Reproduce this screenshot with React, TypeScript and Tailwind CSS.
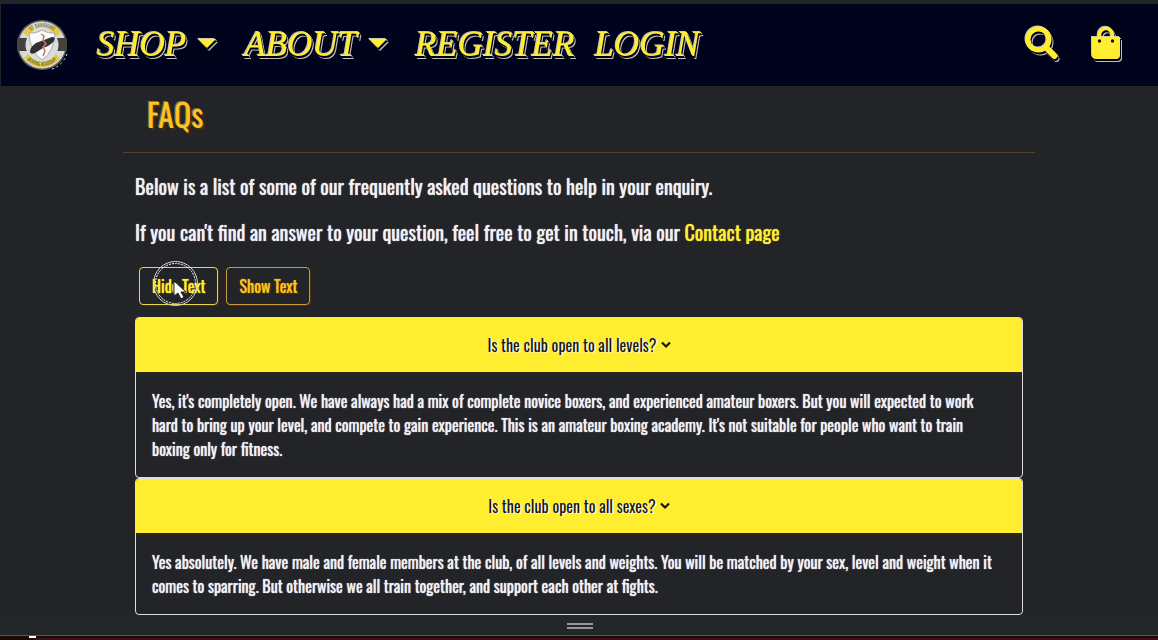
import type { ReactNode } from "react";

const faqs = [
  {
    id: "levels",
    question: "Is the club open to all levels?",
    answer:
      "Yes, it's completely open. We have always had a mix of complete novice boxers, and experienced amateur boxers. But you will expected to work hard to bring up your level, and compete to gain experience. This is an amateur boxing academy. It's not suitable for people who want to train boxing only for fitness.",
  },
  {
    id: "sexes",
    question: "Is the club open to all sexes?",
    answer:
      "Yes absolutely. We have male and female members at the club, of all levels and weights. You will be matched by your sex, level and weight when it comes to sparring. But otherwise we all train together, and support each other at fights.",
  },
];

const glow =
  "[filter:drop-shadow(-1px_-1px_0_#c9c8b4)_drop-shadow(1px_2px_0_#000)_drop-shadow(1px_1px_0_#ffffffc0)]";

function Logo() {
  return (
    <svg viewBox="0 0 52 52" className="size-13" role="img" aria-label="Boxing academy logo">
      <defs>
        <path id="arc-top" d="M8 26a18 18 0 0 1 36 0" />
        <path id="arc-bottom" d="M5 26a21 21 0 0 0 42 0" />
      </defs>
      <path d="M51 35a25 25 0 0 1-18 16" fill="none" stroke="#fff" strokeDasharray="2 3" />
      <circle cx="26" cy="26" r="25" fill="#5d5e62" />
      <circle cx="26" cy="26" r="23.5" fill="#d9d8d2" />
      <path d="M7 14q3-5 8-8l4 6q-4 2-6 6zM45 14q-3-5-8-8l-4 6q4 2 6 6zM8 39a22 22 0 0 0 36 0l-5-5a17 17 0 0 1-26 0z" fill="#e3cc45" />
      <path d="M1 19h10v13H1zM41 19h10v13H41z" fill="#44423f" />
      <circle cx="26" cy="26" r="16.5" fill="#dcdcdc" />
      <path d="M26 11q6 4 13 3-1 19-13 27-12-8-13-27 7 1 13-3z" fill="#fafafa" stroke="#aaa" />
      <path d="M14 32q1-5 6-8l16-6q4 0 2 4-4 5-11 7l-8 5q-5 2-5-2z" fill="#303034" />
      <path d="M25 15l3 2-1 4 3 4-3 3 2 4-2 5" fill="none" stroke="#c87862" strokeWidth="1.500" />
      <text fontSize="5" fill="#6b6238" textAnchor="middle">
        <textPath href="#arc-top" startOffset="50%">ST SAVIOURS</textPath>
      </text>
      <text fontSize="5" fill="#6b6238" textAnchor="middle">
        <textPath href="#arc-bottom" startOffset="50%">BOXING ACADEMY</textPath>
      </text>
    </svg>
  );
}

function NavLink({ children, caret }: { children: string; caret?: boolean }) {
  return (
    <a href="#" className={`flex items-center gap-3 ${caret ? "pr-2" : ""} ${glow}`}>
      {children}
      {caret && (
        <svg viewBox="0 0 18 9" className="mb-1 h-[9px] w-[18px]" aria-hidden="true">
          <path d="M0 0h18l-9 9z" fill="currentColor" />
        </svg>
      )}
    </a>
  );
}

function TextButton({ children, active }: { children: ReactNode; active?: boolean }) {
  return (
    <button
      type="button"
      className={`relative h-[38px] rounded border px-3 text-base whitespace-nowrap [box-shadow:1px_1px_1px_#4b3300] ${
        active
          ? "border-[#e5d653] text-[#ffed2f] [text-shadow:0_0_1px_#ffed2f,1px_1px_1px_#4b3300]"
          : "border-[#c99b3e] text-[#ffc21e] [text-shadow:0_0_1px_#ffc21e,1px_1px_1px_#4b3300]"
      }`}
    >
      {children}
    </button>
  );
}

function Pointer() {
  return (
    <svg viewBox="0 0 48 48" className="pointer-events-none absolute -top-2 left-3 size-12" aria-hidden="true">
      <circle cx="23.5" cy="23.5" r="22" fill="none" stroke="#d5d5d5" />
      <circle cx="23.5" cy="23.5" r="20" fill="none" stroke="#fff" strokeDasharray="2 1" />
      <path d="M22 21v15l4-3 3 6 3-2-3-5h5z" fill="#fff" stroke="#202126" />
      <path d="M29 32l4 6" stroke="#202126" strokeDasharray="1 1" />
    </svg>
  );
}

export default function App() {
  return (
    <div className="flex min-h-screen flex-col bg-[#232428] pt-1 font-['Oswald','Liberation_Sans_Narrow','Liberation_Sans',sans-serif] text-[#f1f1f4]">
      <header className="ml-px flex h-[82px] shrink-0 items-center justify-between bg-[#00031c] pr-[37px] pl-[15px]">
        <div className="flex items-center">
          <a href="#" className="mr-[29px]">
            <Logo />
          </a>
          <nav
            aria-label="Main"
            className="flex items-center gap-5 font-['Liberation_Serif',serif] text-[35px] leading-10 text-[#ffed2f] italic"
          >
            <NavLink caret>SHOP</NavLink>
            <NavLink caret>ABOUT</NavLink>
            <NavLink>REGISTER</NavLink>
            <NavLink>LOGIN</NavLink>
          </nav>
        </div>
        <div className="flex items-center gap-8 pb-1 text-[#ffed2f]">
          <button type="button" aria-label="Search" className={glow}>
            <svg viewBox="0 0 34 34" className="size-[34px]">
              <circle cx="13.5" cy="13.5" r="10.5" fill="none" stroke="currentColor" strokeWidth="5" />
              <path d="M21.5 22l8 8" stroke="currentColor" strokeWidth="6" strokeLinecap="round" />
            </svg>
          </button>
          <a href="#" aria-label="Shopping bag" className={glow}>
            <svg viewBox="0 0 30 34" className="h-[34px] w-[30px]">
              <path d="M8.500 13V9a6.500 6.500 0 0 1 13 0v4" fill="none" stroke="currentColor" strokeWidth="3.500" />
              <path d="M1 11h28v18q0 4-4 4H5q-4 0-4-4z" fill="currentColor" />
              <circle cx="8.500" cy="15" r="1.700" fill="#111" />
              <circle cx="21.500" cy="15" r="1.700" fill="#111" />
            </svg>
          </a>
        </div>
      </header>

      <main className="mx-auto w-full max-w-[912px] flex-1">
        <h1 className="border-b border-[#51452f] px-6 pt-2 pb-[18px] text-[32px] leading-10 text-[#ffc21e] [text-shadow:-1px_-1px_0_#d5c99f80,2px_2px_1px_#4b3300]">
          FAQs
        </h1>
        <div className="px-3">
          <div className="space-y-4 pt-[18px] text-xl leading-[30px] [text-shadow:0_0_1px_#f1f1f4]">
            <p>Below is a list of some of our frequently asked questions to help in your enquiry.</p>
            <p>
              If you can't find an answer to your question, feel free to get in touch, via our{" "}
              <a href="#" className="text-[#ffed2f] [text-shadow:0_0_1px_#ffed2f]">
                Contact page
              </a>
            </p>
          </div>
          <div className="flex gap-2 px-1 pt-5 pb-3">
            <TextButton active>
              Hide Text
              <Pointer />
            </TextButton>
            <TextButton>Show Text</TextButton>
          </div>
          {faqs.map((faq) => (
            <section key={faq.id} className="overflow-hidden rounded border border-[#deded8]">
              <h2 className="border-b-2 border-[#2e290b] bg-[#ffed2f]">
                <button
                  type="button"
                  aria-expanded="true"
                  aria-controls={faq.id}
                  className="flex h-[54px] w-full items-center justify-center gap-1 text-base text-[#171605] [text-shadow:1px_0_0_#fff,2px_1px_0_#fff6a0]"
                >
                  {faq.question}
                  <svg viewBox="0 0 10 8" className="h-2 w-[10px]" aria-hidden="true">
                    <path d="M1 1.500l4 4 4-4" fill="none" stroke="currentColor" strokeWidth="2.200" />
                  </svg>
                </button>
              </h2>
              <div id={faq.id} className="pt-[15px] pr-6 pb-4 pl-4 text-base leading-6 [text-shadow:0_0_1px_#f1f1f4]">
                <p>{faq.answer}</p>
              </div>
            </section>
          ))}
        </div>
      </main>

      <footer className="shrink-0">
        <div className="flex h-5 flex-col items-center justify-center gap-[2px] bg-[#24272a] pl-[2px] pt-[2px]">
          <span className="h-[2px] w-[26px] bg-[#98989c]" />
          <span className="h-[2px] w-[26px] bg-[#98989c]" />
        </div>
        <div className="flex h-[5px] border-t border-[#55565a] bg-[#1c0b05]">
          <span className="ml-[29px] h-[2px] w-[7px] bg-white" />
          <span className="mt-[2px] flex-1 bg-[#3a101c]" />
        </div>
      </footer>
    </div>
  );
}
